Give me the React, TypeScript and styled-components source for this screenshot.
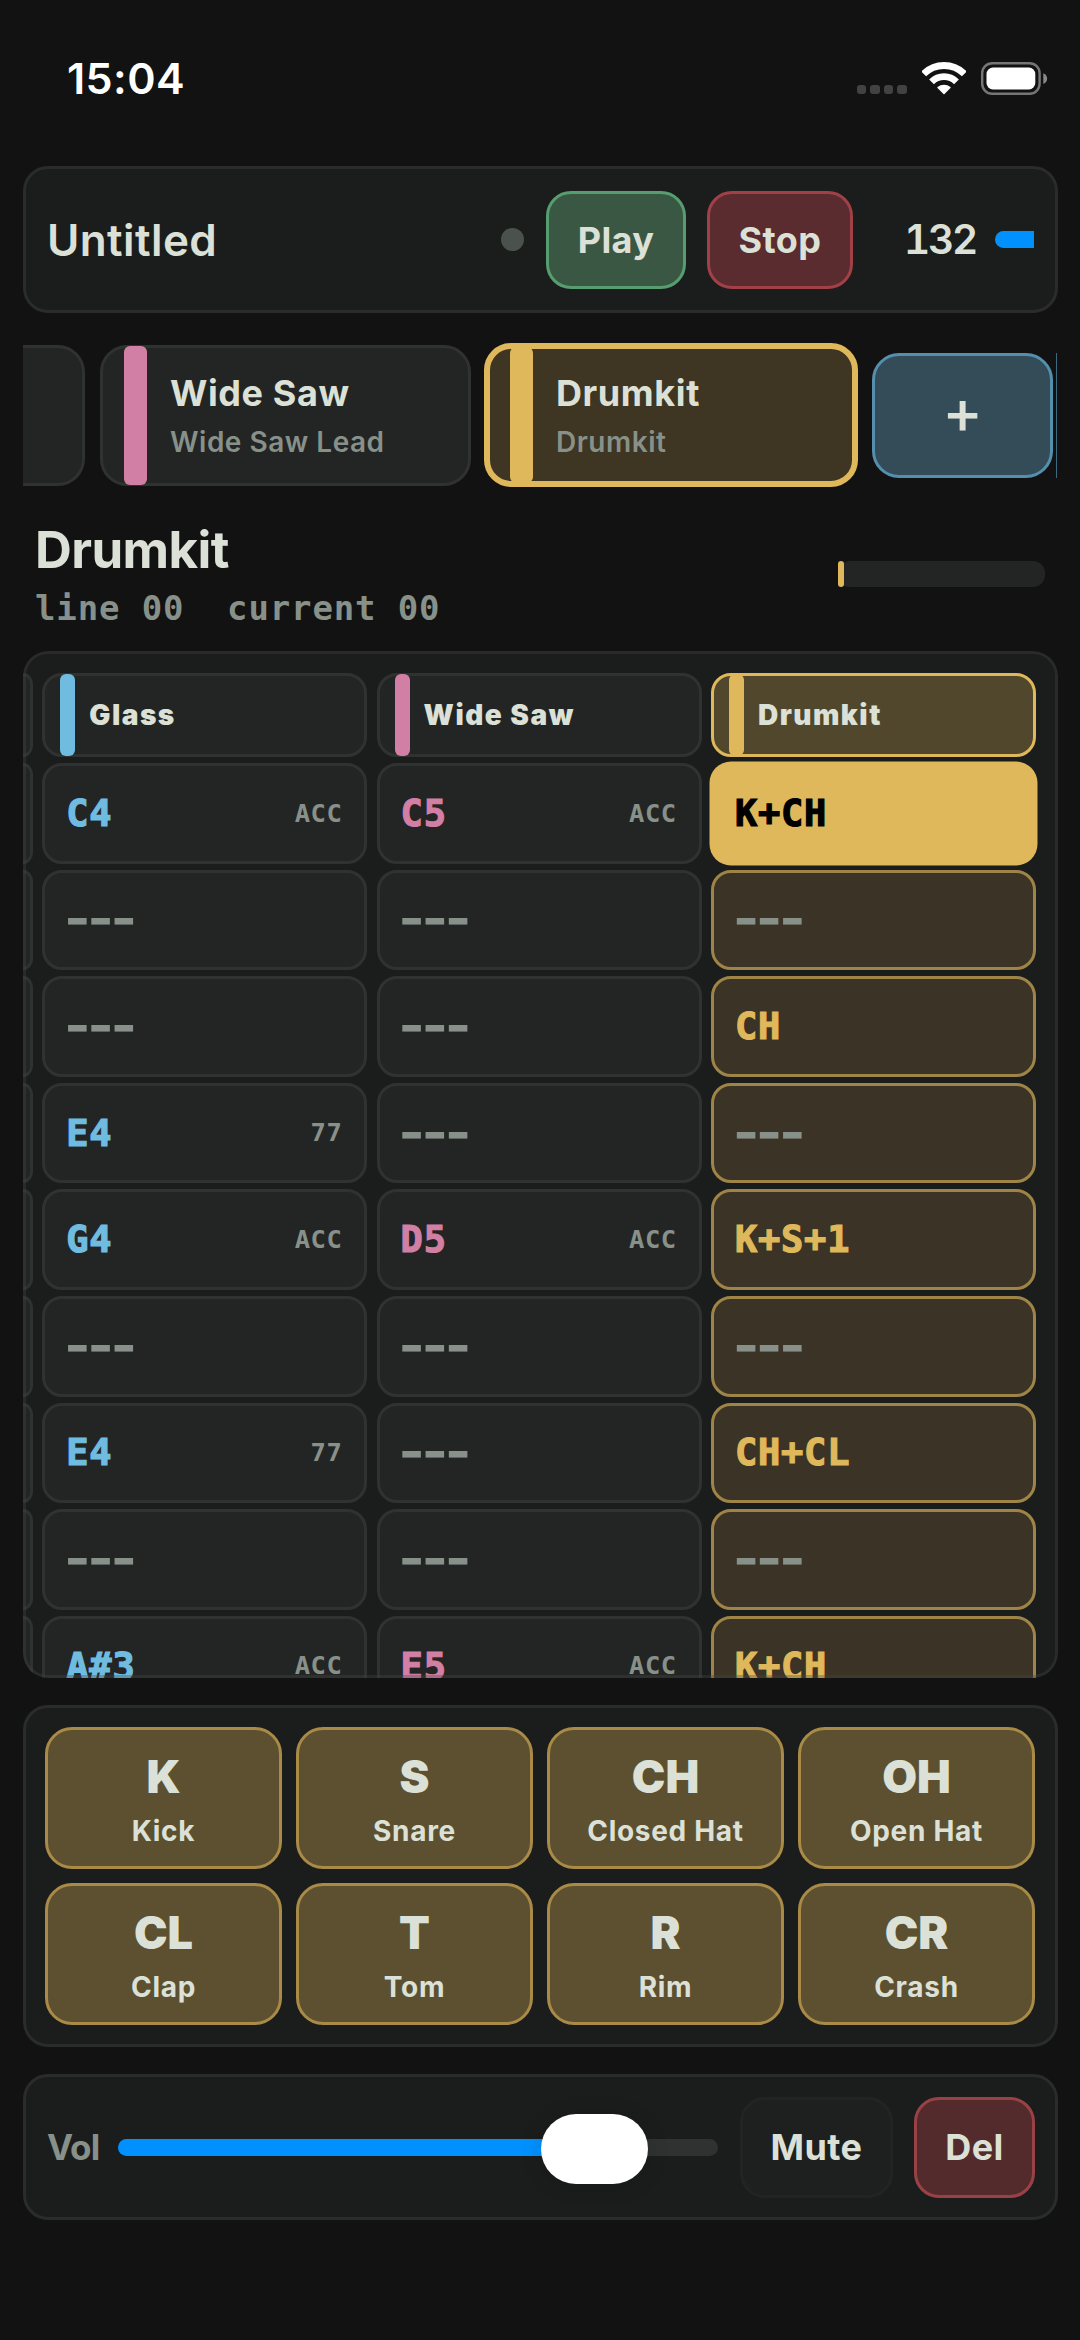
import React from "react";
import styled, { createGlobalStyle, css } from "styled-components";

const c = {
  bg: "#121212",
  panel: "#1b1d1c",
  line: "#2a2b2b",
  cell: "#232524",
  cellLine: "#303231",
  text: "#dce1d7",
  muted: "#87918a",
  gold: "#dfb85b",
  blue: "#70bce0",
  pink: "#d27fa5",
  accent: "#0091ff",
};

const Global = createGlobalStyle`
  * { box-sizing: border-box; }
  body { margin: 0; background: ${c.bg}; }
`;

const Screen = styled.main`
  width: 1080px;
  height: 2340px;
  padding: 0 22px 0 23px;
  display: flex;
  flex-direction: column;
  overflow: hidden;
  background: ${c.bg};
  color: ${c.text};
  font-family: Inter, "Liberation Sans", sans-serif;
  line-height: 1;
  white-space: pre;
`;

const StatusBar = styled.header`
  flex: none;
  height: 166px;
  padding: 57px 10px 0 44px;
  display: flex;
  align-items: flex-start;
  justify-content: space-between;
`;

const Clock = styled.time`
  color: #fff;
  font-size: 43px;
  font-weight: 600;
  letter-spacing: 0.4px;
`;

const StatusIcons = styled.div`
  display: flex;
  align-items: flex-end;
  margin-top: 5px;
  height: 33px;
`;

const Signal = styled.div`
  display: flex;
  gap: 4.2px;
  margin: 0 15px 1px 0;
`;

const SignalDot = styled.i`
  width: 9.3px;
  height: 9.3px;
  border-radius: 3px;
  background: #424242;
`;

const panel = css`
  flex: none;
  border: 3px solid ${c.line};
  border-radius: 25px;
  background: ${c.panel};
`;

const Transport = styled.section`
  ${panel}
  height: 147px;
  padding: 0 21px 0 21px;
  display: flex;
  align-items: center;
`;

const SongName = styled.h1`
  margin: 0;
  flex: 1;
  font-size: 44px;
  font-weight: 600;
  letter-spacing: 0.4px;
`;

const StateDot = styled.i`
  width: 23px;
  height: 23px;
  border-radius: 50%;
  background: #4b514d;
`;

const Button = styled.button<{ $w: number; $h: number; $bg: string; $line: string; $ml?: number }>`
  flex: none;
  width: ${(p) => p.$w}px;
  height: ${(p) => p.$h}px;
  margin: 0 0 0 ${(p) => p.$ml ?? 0}px;
  padding: 0;
  border: 3px solid ${(p) => p.$line};
  border-radius: 25px;
  background: ${(p) => p.$bg};
  color: ${c.text};
  font: 700 36px/1 Inter, "Liberation Sans", sans-serif;
  letter-spacing: 0.4px;
`;

const Tempo = styled.span`
  margin: 2px 1px 0 51px;
  width: 90px;
  font-size: 40.5px;
  font-weight: 600;
  font-variant-numeric: tabular-nums;
  letter-spacing: -2.2px;
`;

const TempoSlider = styled.i`
  width: 39px;
  height: 17px;
  border-radius: 9px 0 0 9px;
  background: ${c.accent};
`;

const Tracks = styled.nav`
  flex: none;
  height: 144px;
  margin-top: 30px;
  display: flex;
  align-items: center;
  overflow: hidden;
`;

const TrackEdge = styled.div`
  flex: none;
  width: 62px;
  height: 141px;
  border: 3px solid ${c.cellLine};
  border-left: 0;
  border-radius: 0 27px 27px 0;
  background: ${c.cell};
`;

const TrackCard = styled.div<{ $on?: boolean }>`
  flex: none;
  display: flex;
  width: ${(p) => (p.$on ? 374 : 371)}px;
  height: ${(p) => (p.$on ? 144 : 141)}px;
  margin-left: ${(p) => (p.$on ? 13 : 15)}px;
  padding-left: ${(p) => (p.$on ? 20 : 21)}px;
  border: ${(p) => (p.$on ? `6px solid ${c.gold}` : `3px solid ${c.cellLine}`)};
  border-radius: 27px;
  background: ${(p) => (p.$on ? "#3e3522" : c.cell)};
`;

const Stripe = styled.i<{ $color: string; $w: number; $bleed: number }>`
  flex: none;
  width: ${(p) => p.$w}px;
  margin: -${(p) => p.$bleed}px 0;
  border-radius: 6px;
  background: ${(p) => p.$color};
`;

const TrackText = styled.div`
  display: flex;
  flex-direction: column;
  justify-content: center;
  gap: 17px;
  margin-left: 23px;
`;

const TrackName = styled.strong`
  font-size: 36px;
  font-weight: 700;
  letter-spacing: 0.6px;
`;

const TrackPreset = styled.span`
  color: ${c.muted};
  font-size: 28px;
  font-weight: 600;
  letter-spacing: 0.5px;
`;

const AddTrack = styled.button`
  flex: none;
  width: 181px;
  height: 125px;
  margin: 0 0 0 14px;
  padding: 0 0 7px;
  border: 3px solid #5490ae;
  border-radius: 27px;
  background: #344b58;
  color: ${c.text};
  font: 500 61px/1 Inter, sans-serif;
`;

const NextEdge = styled.i`
  flex: none;
  width: 1px;
  height: 125px;
  margin-left: 3px;
  background: #3d6a80;
`;

const TrackHeader = styled.section`
  flex: none;
  height: 164px;
  padding: 37px 13px 0 12px;
  display: flex;
  justify-content: space-between;
`;

const TrackTitle = styled.h2`
  margin: 0;
  font-size: 51px;
  font-weight: 700;
  letter-spacing: -0.6px;
`;

const Position = styled.p`
  margin: 16px 0 0;
  color: ${c.muted};
  font: 700 34px/1 "DejaVu Sans Mono", monospace;
  letter-spacing: 0.87px;
`;

const Meter = styled.div`
  width: 207px;
  height: 26px;
  margin-top: 37px;
  border-radius: 12px;
  background: ${c.cell};
`;

const MeterFill = styled.i`
  display: block;
  width: 6px;
  height: 26px;
  border-radius: 3px;
  background: ${c.gold};
`;

const Pattern = styled.section`
  ${panel}
  position: relative;
  height: 1027px;
  border: 0;
  overflow: hidden;

  &::after {
    content: "";
    position: absolute;
    inset: 0;
    border: 3px solid rgba(70, 72, 71, 0.35);
    border-radius: inherit;
    pointer-events: none;
  }
`;

const PatternGrid = styled.div`
  display: grid;
  grid-template-columns: 10px 325px 325px 325px;
  grid-template-rows: 84px;
  grid-auto-rows: 100.5px;
  column-gap: 9.3px;
  row-gap: 6.1px;
  padding-top: 22px;
`;

const EdgeCell = styled.i`
  border: 3px solid ${c.cellLine};
  border-left: 0;
  border-radius: 0 18px 18px 0 / 0 20px 20px 0;
  background: ${c.cell};
`;

const ColumnHead = styled.div<{ $on: boolean }>`
  display: flex;
  align-items: stretch;
  padding-left: 15px;
  border: 3px solid ${(p) => (p.$on ? c.gold : c.cellLine)};
  border-radius: 20px;
  background: ${(p) => (p.$on ? "#51472c" : c.cell)};
`;

const ColumnName = styled.strong`
  align-self: center;
  margin-left: 14px;
  font-size: 28px;
  font-weight: 900;
  letter-spacing: 1.5px;
`;

const Cell = styled.div<{ $tone: "plain" | "gold" | "cursor"; $color: string }>`
  display: flex;
  align-items: center;
  justify-content: space-between;
  padding: 0 22px 0 21px;
  border: 3px solid ${c.cellLine};
  border-radius: 20px;
  background: ${c.cell};
  color: ${(p) => p.$color};
  ${(p) => p.$tone === "gold" && css`border-color: #9f8447; background: #3b3325;`}
  ${(p) => p.$tone === "cursor" && css`
    border-color: ${c.gold};
    background: ${c.gold};
    color: #000;
    box-shadow: 0 0 0 1.5px ${c.gold};
  `}
`;

const Note = styled.span`
  font: 700 37px/1 "DejaVu Sans Mono", monospace;
  letter-spacing: 0.8px;
  -webkit-text-stroke: 1.2px currentColor;
`;

const Rest = styled.span`
  margin: -3px 0 0 -2px;
  color: ${c.muted};
  font: 700 56px/50px Inter, sans-serif;
  letter-spacing: -3px;
`;

const Velocity = styled.span`
  color: ${c.muted};
  font: 700 25.5px/1 "DejaVu Sans Mono", monospace;
  letter-spacing: 0.5px;
`;

const Pads = styled.section`
  ${panel}
  height: 342px;
  margin-top: 27px;
  padding: 19px 20px 0 19px;
  display: grid;
  grid-template-columns: repeat(4, 1fr);
  grid-auto-rows: 142px;
  gap: 14px;
`;

const Pad = styled.button`
  display: flex;
  flex-direction: column;
  align-items: center;
  justify-content: center;
  gap: 18px;
  padding: 2px 0 0;
  border: 3px solid #a98a47;
  border-radius: 27px;
  background: #5d5030;
  color: ${c.text};
  font-family: Inter, sans-serif;
  line-height: 1;
`;

const PadCode = styled.strong`
  font-size: 45px;
  font-weight: 900;
`;

const PadName = styled.span`
  font-size: 28px;
  font-weight: 700;
  letter-spacing: 0.7px;
`;

const Mixer = styled.section`
  ${panel}
  height: 146px;
  margin-top: 27px;
  padding: 0 20px 0 21px;
  display: flex;
  align-items: center;
`;

const VolLabel = styled.label`
  width: 71px;
  color: ${c.muted};
  font-size: 35px;
  font-weight: 700;
  letter-spacing: -0.9px;
`;

const Slider = styled.div`
  width: 600px;
  height: 70px;
  display: flex;
  align-items: center;
`;

const SliderFill = styled.i`
  width: 440px;
  height: 17px;
  border-radius: 9px 0 0 9px;
  background: ${c.accent};
`;

const SliderKnob = styled.i`
  flex: none;
  width: 107px;
  height: 70px;
  margin: 3px -17px 0;
  border-radius: 35px;
  background: #fff;
  box-shadow: 0 2px 22px rgba(0, 0, 0, 0.14);
  z-index: 1;
`;

const SliderRest = styled.i`
  flex: 1;
  height: 17px;
  border-radius: 0 9px 9px 0;
  background: #303231;
`;

const columns = [
  { name: "Glass", color: c.blue },
  { name: "Wide Saw", color: c.pink },
  { name: "Drumkit", color: c.gold },
];

type Step = [note: string, velocity?: string];
const rows: Step[][] = [
  [["C4", "ACC"], ["C5", "ACC"], ["K+CH"]],
  [["---"], ["---"], ["---"]],
  [["---"], ["---"], ["CH"]],
  [["E4", "77"], ["---"], ["---"]],
  [["G4", "ACC"], ["D5", "ACC"], ["K+S+1"]],
  [["---"], ["---"], ["---"]],
  [["E4", "77"], ["---"], ["CH+CL"]],
  [["---"], ["---"], ["---"]],
  [["A#3", "ACC"], ["E5", "ACC"], ["K+CH"]],
];

const pads = [
  ["K", "Kick"], ["S", "Snare"], ["CH", "Closed Hat"], ["OH", "Open Hat"],
  ["CL", "Clap"], ["T", "Tom"], ["R", "Rim"], ["CR", "Crash"],
];

const WifiIcon = () => (
  <svg width="44" height="33" viewBox="0 0 44 33" fill="none" stroke="#fff" strokeWidth="6.8">
    <path d="M1.7 11.9A28.7 28.7 0 0 1 42.3 11.9" />
    <path d="M9.56 19.8A17.6 17.6 0 0 1 34.44 19.8" />
    <path d="M22 31.6L16 25.5A9.6 9.6 0 0 1 28 25.5Z" fill="#fff" stroke="#fff" strokeWidth="1.4" strokeLinejoin="round" />
  </svg>
);

const Battery = styled.svg`
  margin-left: 15.5px;
`;

const BatteryIcon = () => (
  <Battery width="67" height="33" viewBox="0 0 67 33">
    <rect x="1.2" y="1.2" width="57.4" height="30.6" rx="10" fill="none" stroke="#767676" strokeWidth="2.4" />
    <rect x="5.5" y="5.6" width="48.8" height="21.8" rx="6.5" fill="#fff" />
    <path d="M62.3 11.2C67.4 13 67.4 20.2 62.3 22Z" fill="#8a8a8a" />
  </Battery>
);

export default function App() {
  return (
    <>
      <Global />
      <Screen>
        <StatusBar>
          <Clock>15:04</Clock>
          <StatusIcons>
            <Signal>{[0, 1, 2, 3].map((i) => <SignalDot key={i} />)}</Signal>
            <WifiIcon />
            <BatteryIcon />
          </StatusIcons>
        </StatusBar>

        <Transport>
          <SongName>Untitled</SongName>
          <StateDot />
          <Button $w={140} $h={98} $bg="#3a5743" $line="#569d70" $ml={22}>Play</Button>
          <Button $w={146} $h={98} $bg="#5a2b2f" $line="#a24047" $ml={21}>Stop</Button>
          <Tempo>132</Tempo>
          <TempoSlider />
        </Transport>

        <Tracks>
          <TrackEdge />
          <TrackCard>
            <Stripe $color={c.pink} $w={23} $bleed={2} />
            <TrackText>
              <TrackName>Wide Saw</TrackName>
              <TrackPreset>Wide Saw Lead</TrackPreset>
            </TrackText>
          </TrackCard>
          <TrackCard $on>
            <Stripe $color={c.gold} $w={23} $bleed={2} />
            <TrackText>
              <TrackName>Drumkit</TrackName>
              <TrackPreset>Drumkit</TrackPreset>
            </TrackText>
          </TrackCard>
          <AddTrack>+</AddTrack>
          <NextEdge />
        </Tracks>

        <TrackHeader>
          <div>
            <TrackTitle>Drumkit</TrackTitle>
            <Position>{"line 00  current 00"}</Position>
          </div>
          <Meter><MeterFill /></Meter>
        </TrackHeader>

        <Pattern>
          <PatternGrid>
            <EdgeCell />
            {columns.map((col) => (
              <ColumnHead key={col.name} $on={col.name === "Drumkit"}>
                <Stripe $color={col.color} $w={15} $bleed={2} />
                <ColumnName>{col.name}</ColumnName>
              </ColumnHead>
            ))}
            {rows.map((row, r) => (
              <React.Fragment key={r}>
                <EdgeCell />
                {row.map(([note, velocity], i) => (
                  <Cell
                    key={i}
                    $tone={i < 2 ? "plain" : r === 0 ? "cursor" : "gold"}
                    $color={columns[i].color}
                  >
                    {note === "---" ? <Rest>{note}</Rest> : <Note>{note}</Note>}
                    {velocity && <Velocity>{velocity}</Velocity>}
                  </Cell>
                ))}
              </React.Fragment>
            ))}
          </PatternGrid>
        </Pattern>

        <Pads>
          {pads.map(([code, name]) => (
            <Pad key={code}>
              <PadCode>{code}</PadCode>
              <PadName>{name}</PadName>
            </Pad>
          ))}
        </Pads>

        <Mixer>
          <VolLabel>Vol</VolLabel>
          <Slider>
            <SliderFill />
            <SliderKnob />
            <SliderRest />
          </Slider>
          <Button $w={153} $h={101} $bg="#1e201f" $line="#222423" $ml={22}>Mute</Button>
          <Button $w={121} $h={101} $bg="#532b2d" $line="#9a4146" $ml={21}>Del</Button>
        </Mixer>
      </Screen>
    </>
  );
}
